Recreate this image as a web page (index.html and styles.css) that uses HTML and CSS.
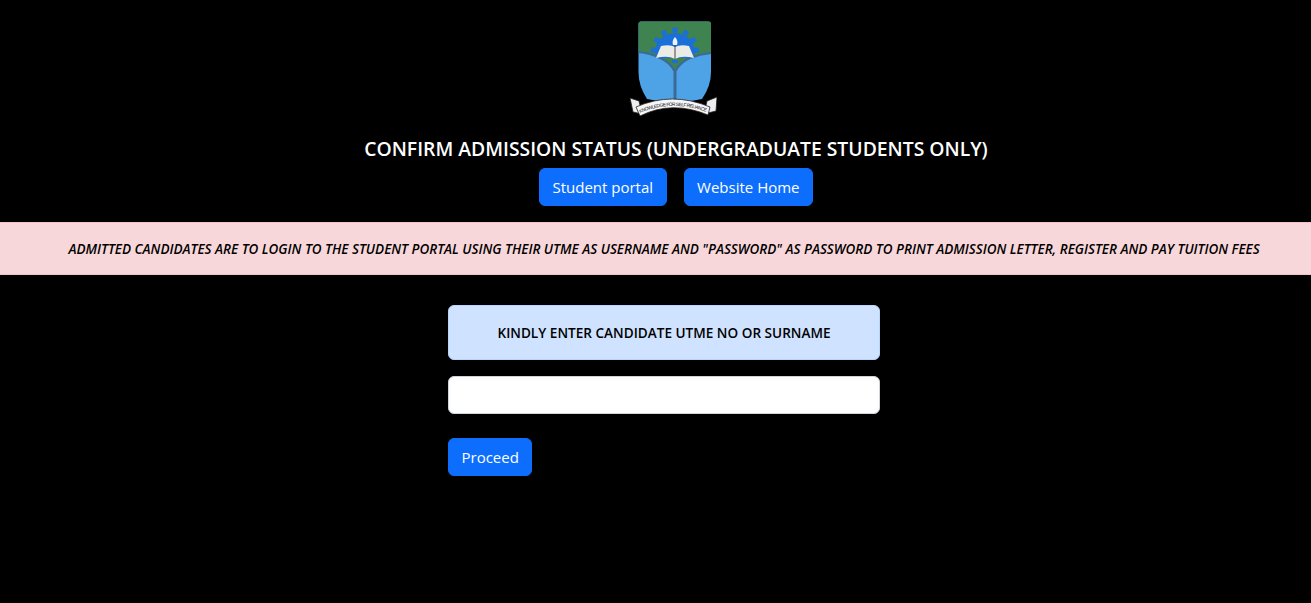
FILE: index.html
```html
<!DOCTYPE html>
<html lang="en">
<head>
    <meta charset="UTF-8">
    <meta name="viewport" content="width=device-width, initial-scale=1.0">
    <title>Confirm Admission Status</title>
    <link rel="stylesheet" href="styles.css">
</head>
<body>
    <div class="header">
        <svg class="logo" viewBox="629 20 88 98" width="88" height="98" role="img" aria-label="School crest">
            <!-- shield -->
            <path d="M638.500 24Q638.500 21.500 641 21.500H708.500Q711 21.500 711 24V72Q711 86 702 99L675 104L647 99Q638.500 86 638.500 72Z" fill="#4ea3e6"/>
            <path d="M638.500 52Q650 53 660 58Q670 62 675 72Q680 62 690 58Q700 54 711 53V24Q711 21.500 708.500 21.500H641Q638.500 21.500 638.500 24Z" fill="#3f8350"/>
            <path d="M638.500 52Q650 53 660 58Q670 62 675 72Q680 62 690 58Q700 54 711 53" fill="none" stroke="#3a6a9a" stroke-width="2"/>
            <path d="M675 72V102" stroke="#3a6a9a" stroke-width="3"/>
            <!-- gear -->
            <g fill="#1a6fd8">
                <path d="M655 53A20 20 0 1 1 695 53L690 58H660Z"/>
                <rect x="672.500" y="27.500" width="5" height="5"/>
                <rect x="672.500" y="27.500" width="5" height="5" transform="rotate(30 675 51.500)"/>
                <rect x="672.500" y="27.500" width="5" height="5" transform="rotate(58 675 51.500)"/>
                <rect x="672.500" y="27.500" width="5" height="5" transform="rotate(86 675 51.500)"/>
                <rect x="672.500" y="27.500" width="5" height="5" transform="rotate(-30 675 51.500)"/>
                <rect x="672.500" y="27.500" width="5" height="5" transform="rotate(-58 675 51.500)"/>
                <rect x="672.500" y="27.500" width="5" height="5" transform="rotate(-86 675 51.500)"/>
            </g>
            <!-- book and flame -->
            <path d="M656 58L661 46Q670 44 675 47Q680 44 689 46L694 58Q682 55 675 59Q668 55 656 58Z" fill="#ecece6"/>
            <path d="M675 37Q678.500 41 677 45H673Q671.500 41 675 37Z" fill="#eef4fa"/>
            <path d="M675 45V59" stroke="#445" stroke-width="1"/>
            <rect x="672" y="60" width="6" height="3" fill="#1a6fd8"/>
            <!-- motto ribbon -->
            <path d="M630 98L639 101L642 114L633 112Z" fill="#eee" stroke="#222" stroke-width="0.800"/>
            <path d="M717 97L707 101L704 114L716 111Z" fill="#eee" stroke="#222" stroke-width="0.800"/>
            <path d="M636 107Q672 91 710 107L708 115Q672 100 640 116Z" fill="#f6f6f6" stroke="#222" stroke-width="0.800"/>
            <path id="mottoLine" d="M640 113Q672 99 708 112.500" fill="none"/>
            <text class="motto"><textPath href="#mottoLine" textLength="68">KNOWLEDGE FOR SELF RELIANCE</textPath></text>
        </svg>
        <h5 class="title">CONFIRM ADMISSION STATUS (UNDERGRADUATE STUDENTS ONLY)</h5>
        <div class="links">
            <a class="btn" href="#">Student portal</a>
            <a class="btn" href="#">Website Home</a>
        </div>
    </div>

    <div class="alert-danger">
        <em>ADMITTED CANDIDATES ARE TO LOGIN TO THE STUDENT PORTAL USING THEIR UTME AS USERNAME AND "PASSWORD" AS PASSWORD TO PRINT ADMISSION LETTER, REGISTER AND PAY TUITION FEES</em>
    </div>

    <form class="search-form">
        <div class="alert-primary">KINDLY ENTER CANDIDATE UTME NO OR SURNAME</div>
        <input class="form-control" type="text" name="utme">
        <button class="btn" type="submit">Proceed</button>
    </form>
</body>
</html>
```

FILE: styles.css
```css
body {
    margin: 0;
    background: #000;
    color: #fff;
    font-family: "Open Sans", "Noto Sans", sans-serif;
    font-size: 16px;
}
.header {
    display: flex;
    flex-direction: column;
    align-items: center;
    padding: 20px 0 0 41px;
}
.logo {
    display: block;
    margin-right: 6px;
}
.motto {
    font-family: "Liberation Sans", sans-serif;
    font-size: 4.800px;
    fill: #111;
}
.title {
    margin: 19px 0 7px;
    font-size: 19.340px;
    font-weight: 600;
    line-height: 24px;
}
.links {
    display: flex;
    gap: 17px;
}
.btn {
    display: inline-block;
    box-sizing: border-box;
    height: 38px;
    padding: 0 12.500px;
    border: 1px solid #0d6efd;
    border-radius: 6px;
    background: #0d6efd;
    color: #fff;
    font-family: inherit;
    font-size: 15px;
    line-height: 36px;
    text-decoration: none;
}
.alert-danger {
    box-sizing: border-box;
    height: 53px;
    margin-top: 16px;
    padding-left: 17px;
    border-top: 1px solid #f5c2c7;
    border-bottom: 1px solid #f5c2c7;
    background: #f8d7da;
    color: #000;
    font-size: 13.470px;
    font-weight: 600;
    line-height: 53px;
    text-align: center;
    white-space: nowrap;
}
.search-form {
    display: flex;
    flex-direction: column;
    align-items: flex-start;
    width: 432px;
    margin: 30px 0 0 448px;
}
.alert-primary {
    box-sizing: border-box;
    width: 100%;
    height: 55px;
    border: 1px solid #b6d4fe;
    border-radius: 6px;
    background: #cfe2ff;
    color: #000;
    font-size: 13.580px;
    font-weight: 600;
    line-height: 53px;
    text-align: center;
}
.form-control {
    box-sizing: border-box;
    width: 100%;
    height: 38px;
    margin: 16px 0 24px;
    border: 1px solid #ced4da;
    border-radius: 6px;
    background: #fff;
}
```
